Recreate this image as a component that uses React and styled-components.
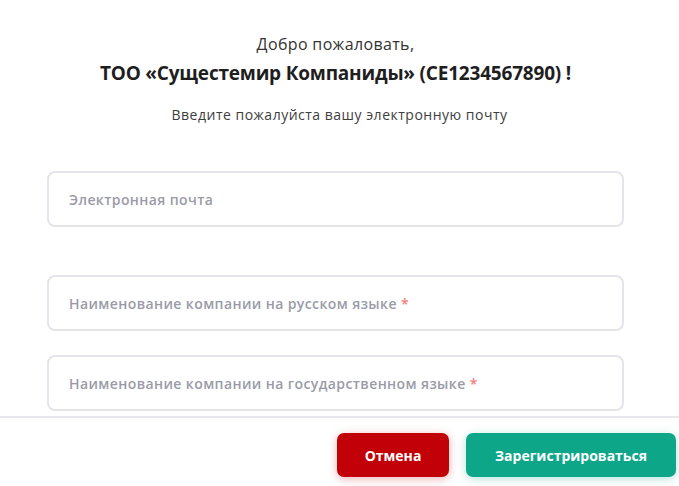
import React from 'react';
import styled, { createGlobalStyle } from 'styled-components';

const GlobalStyle = createGlobalStyle`
	html, body {
		margin: 0;
		padding: 0;
		background: #ffffff;
		font-family: 'Open Sans', 'Liberation Sans', sans-serif;
	}
	* {
		box-sizing: border-box;
	}
`;

const colors = {
	text: '#333333',
	title: '#1e1e1e',
	placeholder: '#9a9ba8',
	border: '#e4e4ea',
	required: '#f27d7d',
	red: '#c20007',
	teal: '#0da688',
};

const Modal = styled.div`
	width: 679px;
	height: 486px;
	display: flex;
	flex-direction: column;
	background: #fff;
	overflow: hidden;
`;

const Body = styled.div`
	flex: 1;
	overflow: hidden;
	padding: 34px 55px 0 47px;
	display: flex;
	flex-direction: column;
`;

const Greeting = styled.p`
	margin: 0;
	text-align: center;
	font-size: 16px;
	font-weight: 400;
	letter-spacing: 0.35px;
	line-height: 20px;
	color: ${colors.text};
`;

const CompanyTitle = styled.h2`
	margin: 7px 0 0;
	text-align: center;
	font-size: 19px;
	font-weight: 700;
	line-height: 24px;
	color: ${colors.title};
	white-space: nowrap;
	letter-spacing: -0.2px;
`;

const Hint = styled.p`
	margin: 21px 0 0;
	text-align: center;
	font-size: 14px;
	letter-spacing: 0.5px;
	line-height: 18px;
	color: #3e3e3e;
	padding-left: 8px;
`;

const Field = styled.div`
	margin-top: ${(props) => props.gap}px;
	height: 56px;
	flex-shrink: 0;
	border: 2px solid ${colors.border};
	border-radius: 8px;
	display: flex;
	align-items: center;
	padding: 0 20px;
	font-size: 14px;
	font-weight: 600;
	letter-spacing: 0.4px;
	color: ${colors.placeholder};
`;

const Required = styled.span`
	color: ${colors.required};
	margin-left: 4px;
`;

const Footer = styled.div`
	height: 70px;
	flex-shrink: 0;
	border-top: 2px solid #e8e8ec;
	display: flex;
	align-items: flex-start;
	justify-content: flex-end;
	gap: 17px;
	padding: 15px 3px 0 0;
`;

const Button = styled.button`
	height: 44px;
	width: ${(props) => props.width}px;
	border: none;
	border-radius: 7px;
	background: ${(props) => props.bg};
	color: #fff;
	font-family: inherit;
	font-size: 14px;
	font-weight: 700;
	cursor: pointer;
	box-shadow: 0 2px 10px ${(props) => props.glow};
`;

const App = () => (
	<>
		<GlobalStyle />
		<Modal>
			<Body>
				<Greeting>Добро пожаловать,</Greeting>
				<CompanyTitle>ТОО «Сущестемир Компаниды» (СЕ1234567890) !</CompanyTitle>
				<Hint>Введите пожалуйста вашу электронную почту</Hint>
				<Field gap={47}>Электронная почта</Field>
				<Field gap={48}>
					Наименование компании на русском языке<Required>*</Required>
				</Field>
				<Field gap={24}>
					Наименование компании на государственном языке<Required>*</Required>
				</Field>
			</Body>
			<Footer>
				<Button width={112} bg={colors.red} glow="rgba(194, 0, 7, 0.3)">
					Отмена
				</Button>
				<Button width={210} bg={colors.teal} glow="rgba(13, 166, 136, 0.3)">
					Зарегистрироваться
				</Button>
			</Footer>
		</Modal>
	</>
);

export default App;
